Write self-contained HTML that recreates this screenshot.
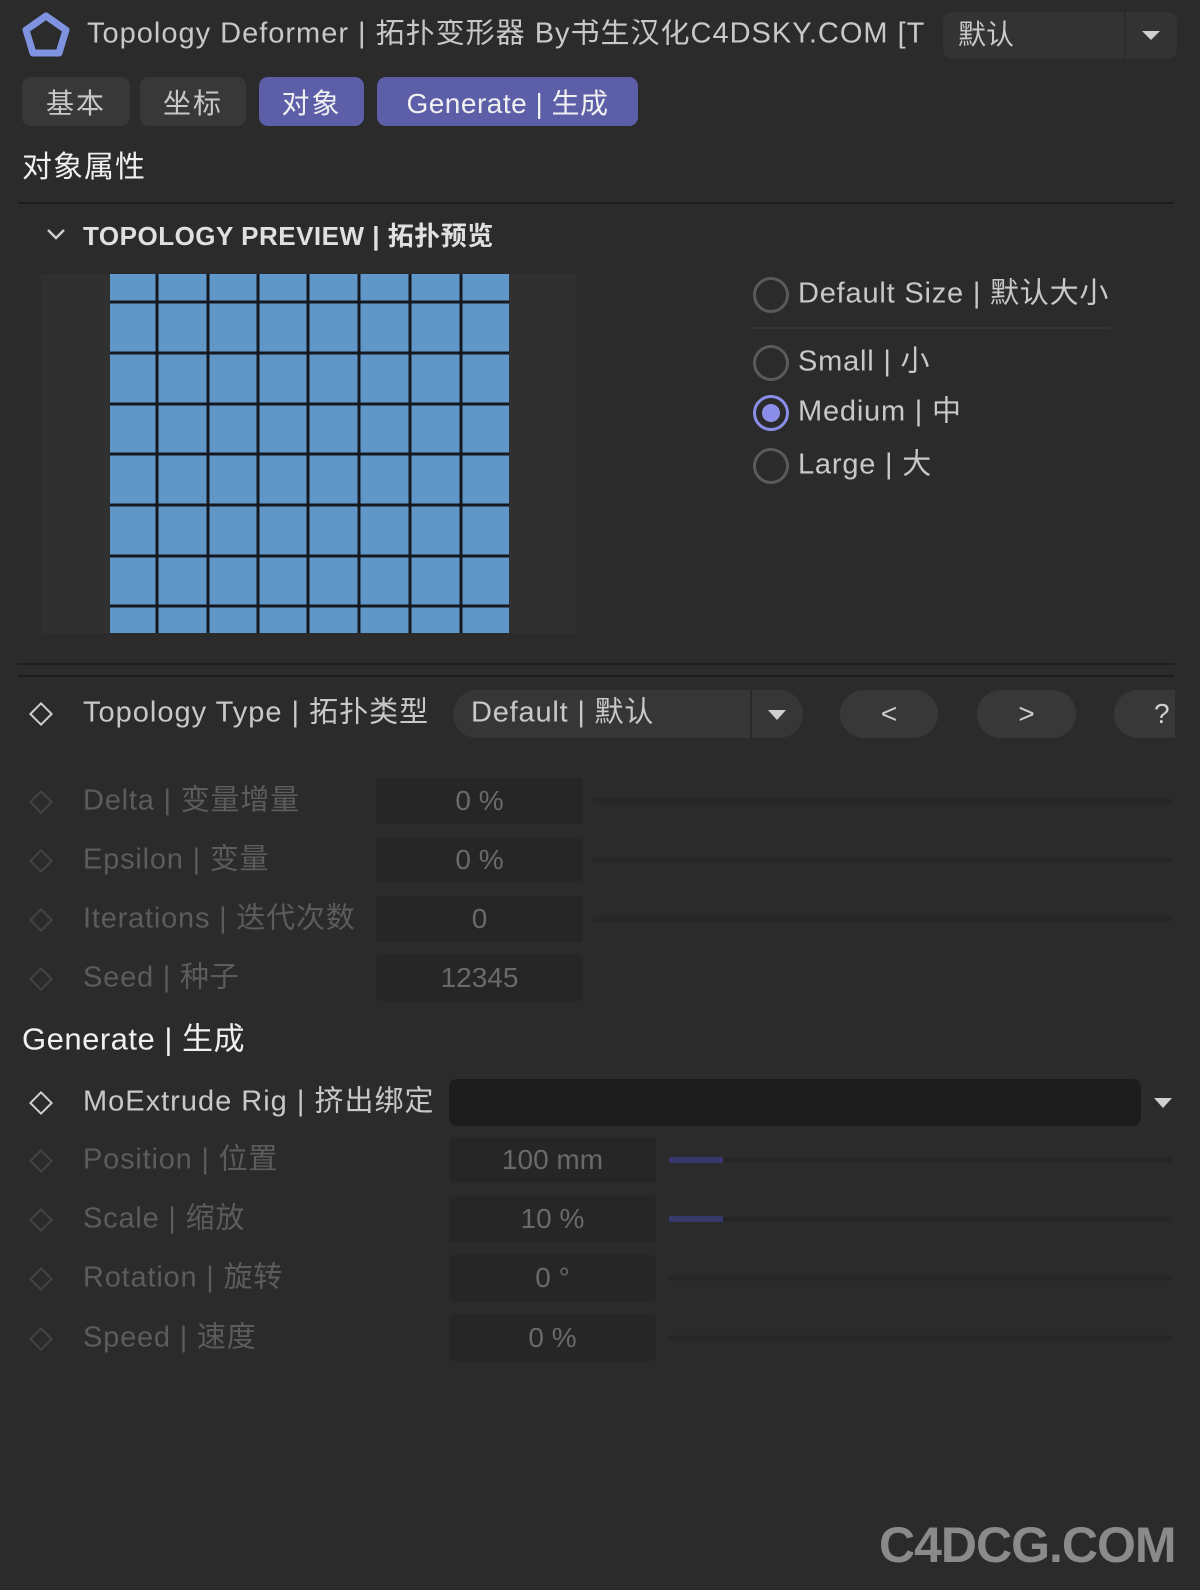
<!DOCTYPE html>
<html><head><meta charset="utf-8"><style>
*{margin:0;padding:0;box-sizing:border-box}
body{width:1200px;height:1590px;background:#2b2b2b;position:relative;overflow:hidden;font-family:"Liberation Sans","Noto Sans CJK SC",sans-serif;color:#cfcfcf}
.a{position:absolute;white-space:nowrap}
.t{line-height:1;transform:translateY(-50%)}
.tab{position:absolute;top:77px;height:49px;border-radius:9px;background:#383838;color:#c8c8c8;font-size:28px;display:flex;align-items:center;justify-content:center}
.on{background:#5c5ea8;color:#f0f0f0}
.dia{position:absolute;width:17px;height:17px;border:2.5px solid #cfcfcf;transform:translate(-50%,-50%) rotate(45deg)}
.dim{border-color:#444}
.inp{position:absolute;background:#262626;border-radius:4px;height:46px;display:flex;align-items:center;justify-content:center;font-size:28px;color:#6a6a6a;transform:translateY(-50%)}
.trk{position:absolute;height:5px;background:#262626;transform:translateY(-50%)}
.rad{position:absolute;width:36px;height:36px;border:3px solid #5a5a5a;border-radius:50%;transform:translate(-50%,-50%)}
.btn{position:absolute;top:690px;height:48px;background:#383838;border-radius:24px;display:flex;align-items:center;justify-content:center;font-size:28px;color:#cfcfcf}
.lb{letter-spacing:0.8px}
</style></head><body>
<svg class="a" style="left:22px;top:12px" width="48" height="46" viewBox="0 0 48 46"><polygon points="24,4 44,18 37,41 11,41 4,18" fill="none" stroke="#7f93e0" stroke-width="7" stroke-linejoin="round"/></svg>
<div class="a t" style="left:87px;top:34px;font-size:29px;color:#c8c8c8;width:838px;overflow:hidden;letter-spacing:1px">Topology Deformer | 拓扑变形器 By书生汉化C4DSKY.COM [T</div>
<div class="a" style="left:943px;top:12px;width:234px;height:47px;background:#333;border-radius:10px"></div>
<div class="a" style="left:1124px;top:12px;width:2px;height:47px;background:#2b2b2b"></div>
<div class="a t" style="left:958px;top:35px;font-size:28px;color:#c8c8c8">默认</div>
<div class="a" style="left:1142px;top:31px;border-left:9px solid transparent;border-right:9px solid transparent;border-top:9px solid #cfcfcf"></div>

<div class="tab" style="left:22px;width:108px;letter-spacing:2px">基本</div>
<div class="tab" style="left:140px;width:106px;letter-spacing:2px">坐标</div>
<div class="tab on" style="left:259px;width:105px;letter-spacing:2px">对象</div>
<div class="tab on" style="left:377px;width:261px;letter-spacing:0.5px">Generate | 生成</div>

<div class="a t" style="left:22px;top:168px;font-size:30px;color:#f0f0f0;letter-spacing:1px">对象属性</div>
<div class="a" style="left:18px;top:202px;width:1156px;height:2px;background:#1e1e1e"></div>
<svg class="a" style="left:46px;top:227px" width="20" height="14"><polyline points="2,3 10,11 18,3" fill="none" stroke="#ccc" stroke-width="2.5"/></svg>
<div class="a t" style="left:83px;top:236px;font-size:26px;font-weight:bold;color:#e0e0e0;letter-spacing:0.5px">TOPOLOGY PREVIEW | 拓扑预览</div>

<div class="a" style="left:41px;top:274px;width:535px;height:359px;background:#303030"></div>
<svg class="a" style="left:110px;top:274px" width="399" height="359">
<rect width="399" height="359" fill="#6196c8"/>
<g stroke="#15191f" stroke-width="3">
<line x1="47" y1="0" x2="47" y2="359"/><line x1="98" y1="0" x2="98" y2="359"/><line x1="148" y1="0" x2="148" y2="359"/><line x1="198" y1="0" x2="198" y2="359"/><line x1="249" y1="0" x2="249" y2="359"/><line x1="300" y1="0" x2="300" y2="359"/><line x1="351" y1="0" x2="351" y2="359"/>
<line x1="0" y1="28" x2="399" y2="28"/><line x1="0" y1="79" x2="399" y2="79"/><line x1="0" y1="130" x2="399" y2="130"/><line x1="0" y1="180" x2="399" y2="180"/><line x1="0" y1="231" x2="399" y2="231"/><line x1="0" y1="282" x2="399" y2="282"/><line x1="0" y1="332" x2="399" y2="332"/>
</g></svg>

<div class="rad" style="left:771px;top:295px"></div>
<div class="a t lb" style="left:798px;top:294px;font-size:29px;color:#c8c8c8">Default Size | 默认大小</div>
<div class="a" style="left:751px;top:327px;width:359px;height:2px;background:#363636"></div>
<div class="rad" style="left:771px;top:363px"></div>
<div class="a t lb" style="left:798px;top:362px;font-size:29px;color:#c8c8c8">Small | 小</div>
<div class="rad" style="left:771px;top:413px;border-color:#8a8ee8"></div>
<div class="a" style="left:771px;top:413px;width:18px;height:18px;border-radius:50%;background:#8a8ee8;transform:translate(-50%,-50%)"></div>
<div class="a t lb" style="left:798px;top:412px;font-size:29px;color:#c8c8c8">Medium | 中</div>
<div class="rad" style="left:771px;top:466px"></div>
<div class="a t lb" style="left:798px;top:465px;font-size:29px;color:#c8c8c8">Large | 大</div>

<div class="a" style="left:18px;top:663px;width:1156px;height:2px;background:#1e1e1e"></div>
<div class="a" style="left:18px;top:675px;width:1156px;height:2px;background:#1e1e1e"></div>

<div class="dia" style="left:41px;top:714px"></div>
<div class="a t" style="left:83px;top:713px;font-size:29px;color:#c8c8c8;letter-spacing:1px">Topology Type | 拓扑类型</div>
<div class="a" style="left:453px;top:690px;width:350px;height:48px;background:#363636;border-radius:24px"></div>
<div class="a" style="left:750px;top:690px;width:2px;height:48px;background:#2b2b2b"></div>
<div class="a t lb" style="left:471px;top:713px;font-size:29px;color:#c8c8c8">Default | 默认</div>
<div class="a" style="left:768px;top:710px;border-left:9px solid transparent;border-right:9px solid transparent;border-top:10px solid #cfcfcf"></div>
<div class="btn" style="left:840px;width:98px">&lt;</div>
<div class="btn" style="left:977px;width:99px">&gt;</div>
<div class="btn" style="left:1114px;width:80px;justify-content:flex-start;padding-left:40px;border-radius:24px 0 0 24px">?</div>
<div class="a" style="left:1175px;top:680px;width:25px;height:70px;background:#2b2b2b"></div>

<div class="dia dim" style="left:41px;top:802px"></div><div class="a t lb" style="left:83px;top:801px;font-size:29px;color:#5c5c5c">Delta | 变量增量</div>
<div class="inp" style="left:376px;top:801px;width:207px">0 %</div><div class="trk" style="left:593px;top:801px;width:579px"></div>
<div class="dia dim" style="left:41px;top:861px"></div><div class="a t lb" style="left:83px;top:860px;font-size:29px;color:#5c5c5c">Epsilon | 变量</div>
<div class="inp" style="left:376px;top:860px;width:207px">0 %</div><div class="trk" style="left:593px;top:860px;width:579px"></div>
<div class="dia dim" style="left:41px;top:920px"></div><div class="a t lb" style="left:83px;top:919px;font-size:29px;color:#5c5c5c">Iterations | 迭代次数</div>
<div class="inp" style="left:376px;top:919px;width:207px">0</div><div class="trk" style="left:593px;top:919px;width:579px"></div>
<div class="dia dim" style="left:41px;top:979px"></div><div class="a t lb" style="left:83px;top:978px;font-size:29px;color:#5c5c5c">Seed | 种子</div>
<div class="inp" style="left:376px;top:978px;width:207px">12345</div>

<div class="a t" style="left:22px;top:1039px;font-size:31px;color:#f0f0f0;letter-spacing:0.5px">Generate | 生成</div>
<div class="dia" style="left:41px;top:1103px"></div>
<div class="a t" style="left:83px;top:1102px;font-size:29px;color:#c8c8c8;letter-spacing:1px">MoExtrude Rig | 挤出绑定</div>
<div class="a" style="left:449px;top:1079px;width:692px;height:47px;background:#1c1c1c;border-radius:8px"></div>
<div class="a" style="left:1154px;top:1098px;border-left:9px solid transparent;border-right:9px solid transparent;border-top:10px solid #cfcfcf"></div>

<div class="dia dim" style="left:41px;top:1161px"></div><div class="a t lb" style="left:83px;top:1160px;font-size:29px;color:#5c5c5c">Position | 位置</div>
<div class="inp" style="left:449px;top:1160px;width:207px">100 mm</div><div class="trk" style="left:669px;top:1160px;width:503px"></div><div class="trk" style="left:669px;top:1160px;width:54px;height:6px;background:#38386a"></div>
<div class="dia dim" style="left:41px;top:1220px"></div><div class="a t lb" style="left:83px;top:1219px;font-size:29px;color:#5c5c5c">Scale | 缩放</div>
<div class="inp" style="left:449px;top:1219px;width:207px">10 %</div><div class="trk" style="left:669px;top:1219px;width:503px"></div><div class="trk" style="left:669px;top:1219px;width:54px;height:6px;background:#38386a"></div>
<div class="dia dim" style="left:41px;top:1279px"></div><div class="a t lb" style="left:83px;top:1278px;font-size:29px;color:#5c5c5c">Rotation | 旋转</div>
<div class="inp" style="left:449px;top:1278px;width:207px">0 °</div><div class="trk" style="left:669px;top:1278px;width:503px"></div>
<div class="dia dim" style="left:41px;top:1339px"></div><div class="a t lb" style="left:83px;top:1338px;font-size:29px;color:#5c5c5c">Speed | 速度</div>
<div class="inp" style="left:449px;top:1338px;width:207px">0 %</div><div class="trk" style="left:669px;top:1338px;width:503px"></div>

<div class="a t" style="left:879px;top:1545px;font-size:50px;font-weight:bold;color:#8a8a8a;letter-spacing:-1px">C4DCG.COM</div>
</body></html>
